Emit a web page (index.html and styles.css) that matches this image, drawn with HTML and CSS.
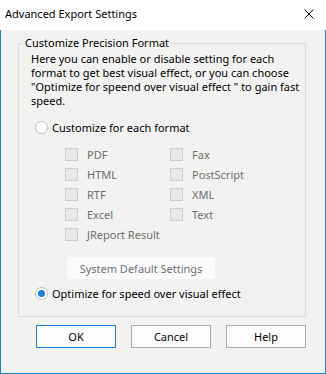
FILE: index.html
```html
<!DOCTYPE html>
<html lang="en">
<head>
    <meta charset="UTF-8">
    <title>Advanced Export Settings</title>
    <link rel="stylesheet" href="styles.css">
</head>
<body>
    <div class="window">
        <div class="titlebar">
            <span class="title">Advanced Export Settings</span>
            <button class="close-btn">
                <svg width="10" height="10" viewBox="0 0 10 10"><path d="M0.5 0.5L9.5 9.5M9.5 0.5L0.5 9.5" stroke="#000" stroke-width="1" fill="none"/></svg>
            </button>
        </div>
        <div class="dialog-body">
            <fieldset class="group">
                <legend>Customize Precision Format</legend>
                <p class="desc">Here you can enable or disable setting for each<br>format to get best visual effect, or you can choose<br>"Optimize for speend over visual effect " to gain fast<br>speed.</p>

                <label class="radio-row"><input type="radio" name="mode"><span>Customize for each format</span></label>

                <div class="format-grid">
                    <label class="check"><input type="checkbox" disabled><span>PDF</span></label>
                    <label class="check"><input type="checkbox" disabled><span>Fax</span></label>
                    <label class="check"><input type="checkbox" disabled><span>HTML</span></label>
                    <label class="check"><input type="checkbox" disabled><span>PostScript</span></label>
                    <label class="check"><input type="checkbox" disabled><span>RTF</span></label>
                    <label class="check"><input type="checkbox" disabled><span>XML</span></label>
                    <label class="check"><input type="checkbox" disabled><span>Excel</span></label>
                    <label class="check"><input type="checkbox" disabled><span>Text</span></label>
                    <label class="check"><input type="checkbox" disabled><span>JReport Result</span></label>
                </div>

                <button class="sys-btn" disabled>System Default Settings</button>

                <label class="radio-row optimize"><input type="radio" name="mode" checked><span>Optimize for speed over visual effect</span></label>
            </fieldset>

            <div class="buttons">
                <button class="btn default">OK</button>
                <button class="btn">Cancel</button>
                <button class="btn">Help</button>
            </div>
        </div>
    </div>
</body>
</html>
```

FILE: styles.css
```css
* { margin: 0; padding: 0; box-sizing: border-box; }
body {
    font-family: "Noto Sans", "Open Sans", sans-serif;
    font-size: 11px;
    color: #000;
    background: #f2f3f1;
}
.window {
    width: 326px;
    height: 374px;
    display: flex;
    flex-direction: column;
    background: #f2f3f1;
}
.titlebar {
    height: 30px;
    background: #fff;
    display: flex;
    align-items: center;
    justify-content: space-between;
    padding: 0 0 3px 5px;
}
.title {
    line-height: 16px;
    white-space: nowrap;
}
.close-btn {
    width: 46px;
    height: 28px;
    border: none;
    background: none;
    display: flex;
    align-items: center;
    justify-content: center;
    margin-right: -6px;
}
.dialog-body {
    flex: 1;
    border: 1px solid #1a82d6;
    border-top: none;
    display: flex;
    flex-direction: column;
}
.group {
    margin: 5px 19px 0 17px;
    padding: 0 0 15px 0;
    border: 1px solid #dcdcdc;
    min-width: 0;
}
.group legend {
    margin-left: 4px;
    padding: 0 2px;
    line-height: 16px;
}
.desc {
    margin: 1px 0 0 12px;
    line-height: 14px;
    white-space: nowrap;
}
.radio-row {
    display: flex;
    align-items: center;
    gap: 4px;
    height: 16px;
    margin: 11px 0 0 16px;
    white-space: nowrap;
}
.radio-row.optimize {
    margin-top: 6px;
}
.radio-row input {
    appearance: none;
    width: 13px;
    height: 13px;
    border: 1px solid #bdbdbd;
    border-radius: 50%;
    background: #fff;
    display: grid;
    place-content: center;
}
.radio-row input:checked::before {
    content: "";
    width: 7px;
    height: 7px;
    border-radius: 50%;
    background: #1a7fd6;
}
.format-grid {
    display: grid;
    grid-template-columns: 105px 105px;
    grid-auto-rows: 20px;
    margin: 9px 0 0 46px;
}
.check {
    display: flex;
    align-items: center;
    gap: 9px;
    color: #6d6d6d;
    white-space: nowrap;
}
.check input {
    appearance: none;
    width: 13px;
    height: 13px;
    border: 1px solid #cccccc;
    background: #e8e8e8;
}
.sys-btn {
    width: 148px;
    height: 22px;
    margin: 13px 0 0 48px;
    border: none;
    background: #fbfcfa;
    color: #6d6d7a;
    font: inherit;
}
.buttons {
    display: flex;
    gap: 15px;
    margin: 8px 0 0 35px;
}
.btn {
    width: 80px;
    height: 23px;
    border: 1px solid #adadad;
    background: #fdfdfd;
    font: inherit;
    color: #000;
}
.btn.default {
    border-color: #1a7fd6;
}
```
